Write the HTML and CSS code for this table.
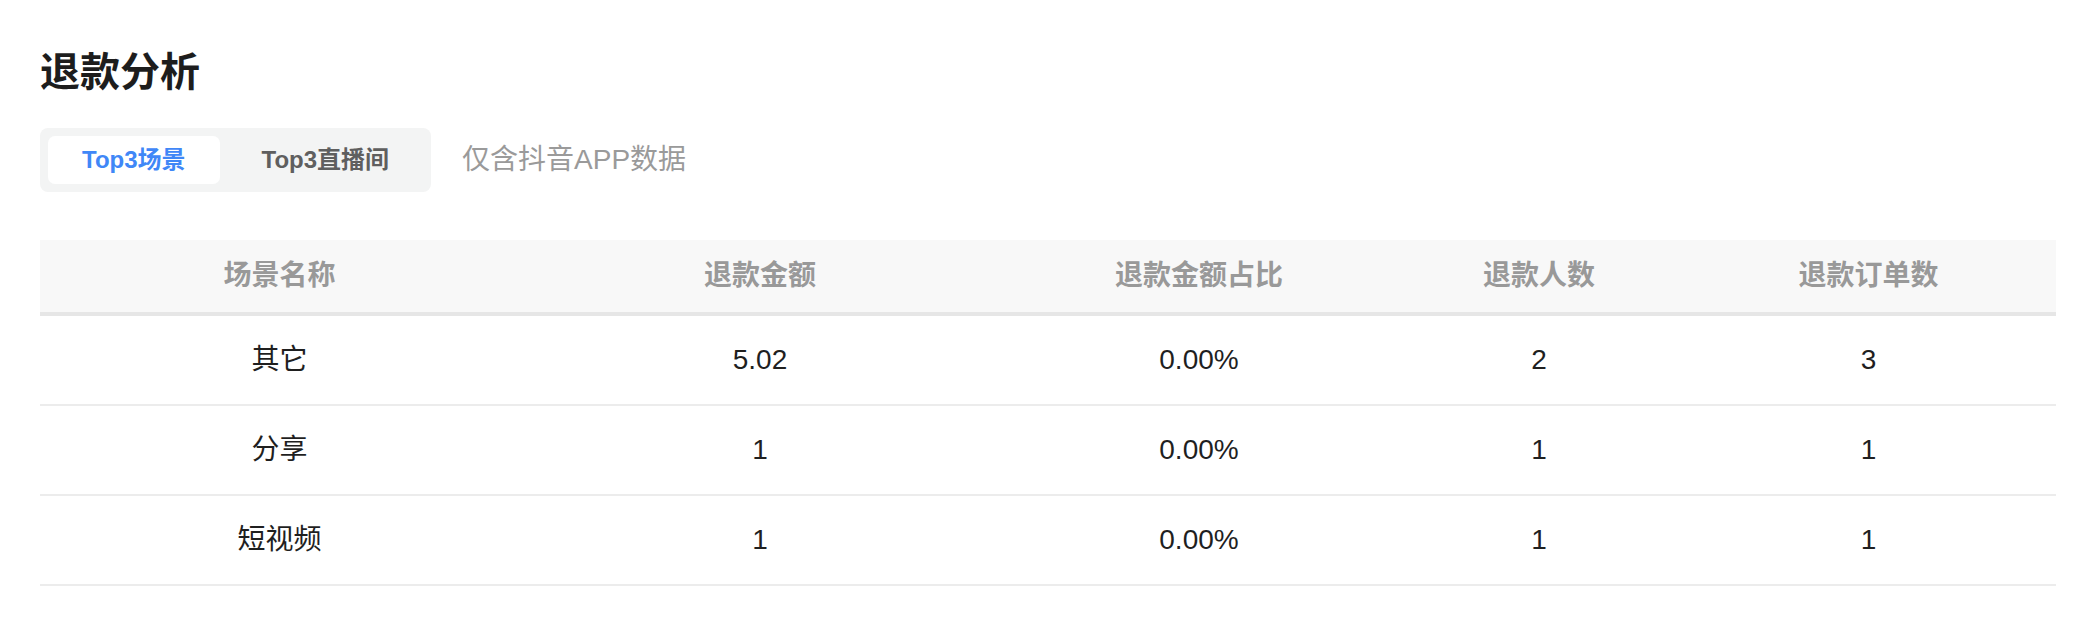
FILE: index.html
```html
<!DOCTYPE html>
<html lang="zh-CN">
<head>
<meta charset="utf-8">
<title>退款分析</title>
<link rel="stylesheet" href="styles.css">
</head>
<body>
<div class="page">
  <h1 class="title">退款分析</h1>
  <div class="toolbar">
    <div class="tabs">
      <div class="tab active">Top3场景</div>
      <div class="tab">Top3直播间</div>
    </div>
    <div class="note">仅含抖音APP数据</div>
  </div>
  <table class="grid">
    <colgroup>
      <col class="c1"><col class="c2"><col class="c3"><col class="c4"><col class="c5">
    </colgroup>
    <thead>
      <tr><th>场景名称</th><th>退款金额</th><th>退款金额占比</th><th>退款人数</th><th>退款订单数</th></tr>
    </thead>
    <tbody>
      <tr><td>其它</td><td>5.02</td><td>0.00%</td><td>2</td><td>3</td></tr>
      <tr><td>分享</td><td>1</td><td>0.00%</td><td>1</td><td>1</td></tr>
      <tr><td>短视频</td><td>1</td><td>0.00%</td><td>1</td><td>1</td></tr>
    </tbody>
  </table>
</div>
</body>
</html>
```
FILE: styles.css
```css
* { box-sizing: border-box; }
html, body { margin: 0; padding: 0; background: #ffffff; }
body {
  font-family: "Liberation Sans", "Noto Sans CJK SC", sans-serif;
  color: #1f1f1f;
}
.page {
  padding: 41px 0 0 40px;
}
.title {
  margin: 0;
  font-family: "Noto Sans CJK SC", sans-serif;
  font-size: 40px;
  line-height: 56px;
  font-weight: 700;
  color: #1d1d1d;
}
.toolbar {
  display: flex;
  align-items: center;
  gap: 31px;
  margin-top: 31px;
}
.tabs {
  display: flex;
  gap: 8px;
  padding: 8px;
  background: #f3f4f4;
  border-radius: 8px;
}
.tab {
  height: 48px;
  line-height: 48px;
  padding: 0 34px;
  font-size: 24px;
  font-weight: 700;
  color: #5f5f5f;
  border-radius: 7px;
}
.tab.active {
  background: #ffffff;
  color: #4087f7;
}
.note {
  font-size: 28px;
  line-height: 40px;
  color: #9a9a9a;
}
.grid {
  margin-top: 48px;
  width: 2016px;
  table-layout: fixed;
  border-collapse: separate;
  border-spacing: 0;
}
.c1 { width: 479px; }
.c2 { width: 482px; }
.c3 { width: 396px; }
.c4 { width: 284px; }
.c5 { width: 375px; }
.grid th {
  padding: 0;
  height: 76px;
  line-height: 72px;
  font-size: 28px;
  font-weight: 700;
  color: #999999;
  background: #f8f8f8;
  border-bottom: 4px solid #e6e6e6;
  text-align: center;
}
.grid td {
  padding: 0;
  height: 90px;
  line-height: 88px;
  font-size: 28px;
  font-weight: 400;
  color: #1f1f1f;
  border-bottom: 2px solid #ececec;
  text-align: center;
}
```
